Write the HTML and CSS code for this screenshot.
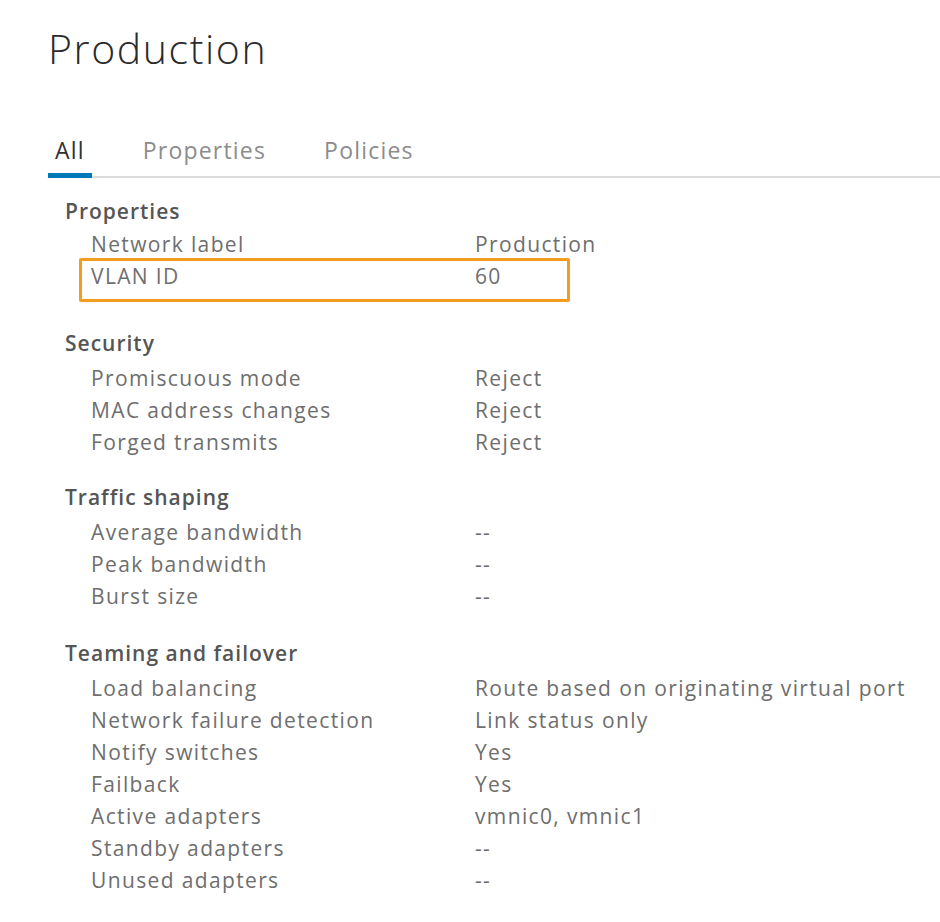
FILE: index.html
```html
<!DOCTYPE html>
<html lang="en">
<head>
<meta charset="utf-8">
<title>Production</title>
<link rel="stylesheet" href="styles.css">
</head>
<body>
<div class="page">
  <h1 class="title">Production</h1>
  <nav class="tabs">
    <span class="tab active">All</span>
    <span class="tab">Properties</span>
    <span class="tab">Policies</span>
  </nav>
  <div class="content">
    <section class="section first">
      <div class="section-title">Properties</div>
      <div class="row"><span class="label">Network label</span><span class="value">Production</span></div>
      <div class="row highlight"><span class="label">VLAN ID</span><span class="value">60</span></div>
    </section>
    <section class="section">
      <div class="section-title">Security</div>
      <div class="row"><span class="label">Promiscuous mode</span><span class="value">Reject</span></div>
      <div class="row"><span class="label">MAC address changes</span><span class="value">Reject</span></div>
      <div class="row"><span class="label">Forged transmits</span><span class="value">Reject</span></div>
    </section>
    <section class="section wide-gap">
      <div class="section-title">Traffic shaping</div>
      <div class="row"><span class="label">Average bandwidth</span><span class="value">--</span></div>
      <div class="row"><span class="label">Peak bandwidth</span><span class="value">--</span></div>
      <div class="row"><span class="label">Burst size</span><span class="value">--</span></div>
    </section>
    <section class="section">
      <div class="section-title">Teaming and failover</div>
      <div class="row"><span class="label">Load balancing</span><span class="value">Route based on originating virtual port</span></div>
      <div class="row"><span class="label">Network failure detection</span><span class="value">Link status only</span></div>
      <div class="row"><span class="label">Notify switches</span><span class="value">Yes</span></div>
      <div class="row"><span class="label">Failback</span><span class="value">Yes</span></div>
      <div class="row"><span class="label">Active adapters</span><span class="value">vmnic0, vmnic1</span></div>
      <div class="row"><span class="label">Standby adapters</span><span class="value">--</span></div>
      <div class="row"><span class="label">Unused adapters</span><span class="value">--</span></div>
    </section>
  </div>
</div>
</body>
</html>
```

FILE: styles.css
```css
* { box-sizing: border-box; }

html, body {
  margin: 0;
  padding: 0;
  background: #ffffff;
}

body {
  font-family: "Open Sans", "DejaVu Sans", sans-serif;
  color: #6e6e6e;
}

.page {
  padding-left: 48px;
}

.title {
  margin: 24px 0 0 0;
  font-size: 41px;
  line-height: 48px;
  font-weight: 300;
  letter-spacing: 1.6px;
  color: #2b2b2b;
}

.tabs {
  display: flex;
  gap: 44px;
  margin-top: 60px;
  border-bottom: 2px solid #dcdcdc;
}

.tab {
  padding: 0 7px 5px 7px;
  font-size: 23px;
  line-height: 36px;
  letter-spacing: 1.2px;
  color: #8c8c8c;
  border-bottom: 5px solid transparent;
  margin-bottom: -2px;
}

.tab.active {
  color: #313131;
  border-bottom-color: #0079b8;
}

.content {
  padding-left: 17px;
  padding-top: 16px;
}

.section {
  margin-bottom: 22px;
}

.section.first {
  margin-bottom: 34px;
}

.section.wide-gap {
  margin-bottom: 24px;
}

.section-title {
  font-size: 21px;
  line-height: 34px;
  padding-bottom: 2px;
  font-weight: 600;
  letter-spacing: 1px;
  color: #555555;
}

.section.first .section-title {
  padding-bottom: 0;
}

.row {
  position: relative;
  display: grid;
  grid-template-columns: 384px 1fr;
  padding-left: 26px;
  font-size: 21px;
  line-height: 32px;
  letter-spacing: 1.36px;
  color: #6e6e6e;
}

.row.highlight::after {
  content: "";
  position: absolute;
  left: 14px;
  top: -2px;
  width: 485px;
  height: 38px;
  border: 3px solid #f59b1f;
  border-radius: 2px;
}
```
